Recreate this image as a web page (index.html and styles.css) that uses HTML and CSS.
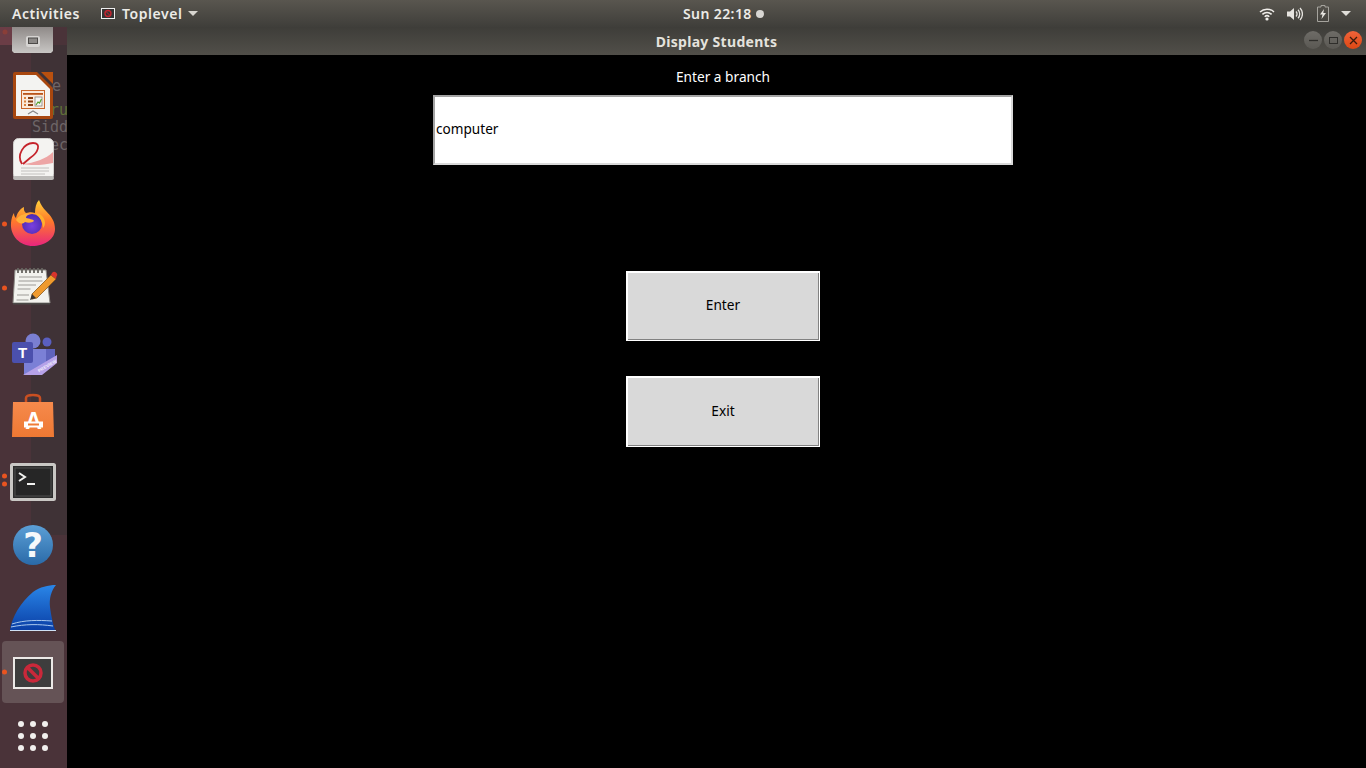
FILE: index.html
```html
<!DOCTYPE html>
<html lang="en">
<head>
<meta charset="utf-8">
<title>Display Students</title>
<link rel="stylesheet" href="styles.css">
</head>
<body>
<header class="topbar">
  <div class="top-left">
    <span class="activities">Activities</span>
    <span class="appmenu">
      <svg class="app-icon" width="14" height="11" viewBox="0 0 14 11"><rect x=".5" y=".5" width="13" height="10" fill="#333" stroke="#eee"/><circle cx="7" cy="5.500" r="3" fill="none" stroke="#c4242f" stroke-width="1.400"/><path d="M5 3.500l4 4" stroke="#c4242f"/></svg>
      <span class="app-name">Toplevel</span>
      <svg class="caret" width="10" height="5" viewBox="0 0 10 5"><path d="M0 0h10L5 5z" fill="#d8d6d0"/></svg>
    </span>
  </div>
  <div class="clock">Sun 22:18<i class="clock-dot"></i></div>
  <div class="tray">
    <svg width="16" height="14" viewBox="0 0 16 14"><path d="M1 5a10 10 0 0 1 14 0M3.400 7.400a6.600 6.600 0 0 1 9.200 0M5.700 9.700a3.400 3.400 0 0 1 4.600 0" fill="none" stroke="#f0eeea" stroke-width="1.500"/><circle cx="8" cy="12" r="1.600" fill="#f0eeea"/></svg>
    <svg width="16" height="14" viewBox="0 0 16 14"><path d="M0 4.500h3L7 1v12L3 9.500H0z" fill="#e6e4df"/><path d="M9 4.500a3.500 3.500 0 0 1 0 5M11 2.800a6 6 0 0 1 0 8.400M13 1a8.600 8.600 0 0 1 0 12" fill="none" stroke="#e6e4df" stroke-width="1.300"/></svg>
    <svg class="battery" width="12" height="17" viewBox="0 0 12 17"><path d="M4 .5h4v1.500h3.500v14.500h-11V2H4z" fill="none" stroke="#a5a39d"/><path d="M7 4L3 9.500h2.500L4.500 14 9 8H6.300z" fill="#e8e6e1"/></svg>
    <svg width="10" height="5" viewBox="0 0 10 5"><path d="M0 0h10L5 5z" fill="#e0ded9"/></svg>
  </div>
</header>
<div class="desktop">
  <aside class="dock">
    <div class="ghost" aria-hidden="true">
      <span class="ghost-e">e</span>
      <span class="ghost-ru">ru</span>
      <span class="ghost-sidd">Sidd</span>
      <span class="ghost-ec">ec</span>
    </div>
    <div class="dock-item first">
      <svg width="62" height="36" viewBox="0 0 62 36">
        <defs><linearGradient id="tile" x1="0" y1="0" x2="0" y2="1"><stop offset="0" stop-color="#8f8a88"/><stop offset="1" stop-color="#c8c6c4"/></linearGradient></defs>
        <circle cx="3" cy="5" r="2.500" fill="#8a3e38"/>
        <path d="M10 0h41v24l-2 2H12l-2-2z" fill="url(#tile)"/>
        <rect x="24" y="9" width="14" height="11" rx="2" fill="#d6d4d2"/>
        <rect x="26.500" y="11" width="9" height="5.500" fill="#8b8886" stroke="#4c4a48"/>
      </svg>
    </div>
    <div class="dock-item">
      <svg width="62" height="62" viewBox="0 0 62 62">
        <path d="M13 7h22l16 16v29a2 2 0 0 1-2 2H13a2 2 0 0 1-2-2V9a2 2 0 0 1 2-2z" fill="#a8470f"/>
        <path d="M39 7h12v12z" fill="#b9500f"/>
        <path d="M14 10h20l14 14v27H14z" fill="#f3f3f1"/>
        <rect x="19.500" y="25.500" width="23" height="18" fill="#fbe9da" stroke="#c8652a"/>
        <rect x="21" y="28" width="20" height="1.800" fill="#b9541a"/>
        <rect x="26" y="32" width="5" height="2" fill="#8a3f12"/><rect x="26" y="35.500" width="5" height="2" fill="#8a3f12"/><rect x="26" y="39" width="5" height="2" fill="#8a3f12"/>
        <rect x="22" y="32" width="2" height="2" fill="#d9823f"/><rect x="22" y="35.500" width="2" height="2" fill="#d9823f"/><rect x="22" y="39" width="2" height="2" fill="#d9823f"/>
        <rect x="33" y="32" width="7" height="9" fill="#f5f5f2" stroke="#777" stroke-width=".7"/>
        <path d="M34 40l2-3 1.500 1 2-4" fill="none" stroke="#57a22e" stroke-width="1.200"/>
        <path d="M26 49l5-3 5 3" fill="none" stroke="#888" stroke-width="1.200"/>
      </svg>
    </div>
    <div class="dock-item">
      <svg width="62" height="62" viewBox="0 0 62 62">
        <rect x="11.500" y="9.500" width="40" height="41" rx="5" fill="#f4f3f1" stroke="#d2d0ce"/>
        <rect x="11" y="47" width="41" height="4" rx="2" fill="#bdbbb9"/>
        <path d="M21 35C32 34 44 30 51 23V34C42 36 30 37 21 35Z" fill="#eda5a5"/>
        <path d="M20 35C14 26 22 14 31 14C40 14 36 24 28 29L21 35" fill="none" stroke="#c5232b" stroke-width="1.800"/>
        <path d="M19 39h28M19 42h28M19 45h24" stroke="#c2c0be" stroke-width="1"/>
      </svg>
    </div>
    <div class="dock-item">
      <svg width="62" height="62" viewBox="0 0 62 62">
        <defs>
          <linearGradient id="fox" x1="0" y1="0" x2="0" y2="1"><stop offset="0" stop-color="#ffd23a"/><stop offset=".45" stop-color="#ff7a2a"/><stop offset="1" stop-color="#e8257d"/></linearGradient>
          <radialGradient id="globe" cx=".5" cy=".6" r=".6"><stop offset="0" stop-color="#7a3fe0"/><stop offset="1" stop-color="#4a2bb0"/></radialGradient>
        </defs>
        <circle cx="2.500" cy="31" r="2.500" fill="#e95420"/>
        <path d="M31 53C18 53 8 43 9 30c.3-4 1.500-8 3-10 0 3 1 4 2 5 1-5 4-9 8-11-.5 3 .5 5 2 6 4-1 6-1 9 0 0-5 1-10 4-13 2 5 4 8 7 11 5 5 9 10 9 18 0 10-10 17-23 17z" fill="url(#fox)"/>
        <circle cx="30" cy="31" r="10" fill="url(#globe)"/>
        <path d="M14 27c3-5 9-7 14-6-3 1-4 2-4 4 3 1 7 1 8 3-2 2-6 2-9 1-3 3-7 1-9-2z" fill="#ffb13a"/>
        <path d="M33 20c5 0 10 4 10 10 0 2-1 4-2 5 0-6-3-11-8-15z" fill="#ffb02c"/>
      </svg>
    </div>
    <div class="dock-item">
      <svg width="62" height="62" viewBox="0 0 62 62">
        <circle cx="2.500" cy="31" r="2.500" fill="#e95420"/>
        <path d="M13 13h31l4 33H11z" fill="#f2f2ee" stroke="#8d8b86"/>
        <path d="M11 46.800h37" stroke="#4c4a48" stroke-width="1.500"/>
        <path d="M16 11v5M20 11v5M24 11v5M28 11v5M32 11v5M36 11v5M40 11v5" stroke="#66645f" stroke-width="1.800"/>
        <path d="M17 20h23M16.500 24h24M16 28h18M15.500 32h13M15 38h12M14.500 43h12" stroke="#9c9a96" stroke-width="1.200"/>
        <path d="M30 37L49 18l5 4L35 41l-5 1z" fill="#ef9a2e" stroke="#8a5a1c" stroke-width=".8"/>
        <path d="M49 18l1-2a2.500 2.500 0 0 1 4.500 3.500l-.5 2.500z" fill="#d8342c"/>
        <path d="M30 37l-2 6 6-2z" fill="#3a3532"/>
      </svg>
    </div>
    <div class="dock-item">
      <svg width="62" height="62" viewBox="0 0 62 62">
        <circle cx="31" cy="20" r="7.500" fill="#7a7fd2"/>
        <circle cx="45" cy="21" r="4.500" fill="#5a5fc0"/>
        <path d="M39 28h14v12L39 48z" fill="#5f63bd"/>
        <path d="M22 28h22v16L22 54z" fill="#7b80d6"/>
        <rect x="10" y="21" width="21" height="21" rx="2" fill="#4b50ad"/>
        <text class="teams-t" x="20.500" y="37">T</text>
        <path d="M21 54L55 34V42L40 54z" fill="#b6a2e8"/>
        <text class="teams-p" transform="translate(37 51.500) rotate(-30)">PREVIEW</text>
      </svg>
    </div>
    <div class="dock-item">
      <svg width="62" height="62" viewBox="0 0 62 62">
        <defs><linearGradient id="bag" x1="0" y1="0" x2="0" y2="1"><stop offset="0" stop-color="#f68a4c"/><stop offset="1" stop-color="#ee7833"/></linearGradient></defs>
        <path d="M24 19v-6c0-4 14-4 14 0v6" fill="none" stroke="#c94f21" stroke-width="2.500"/>
        <path d="M11 17h40l1 35H10z" fill="url(#bag)"/>
        <text class="store-a" x="31.500" y="44">A</text>
        <rect x="22" y="36.500" width="19" height="6" fill="#fff"/>
        <rect x="26" y="38.500" width="11" height="2" fill="#f07c38"/>
      </svg>
    </div>
    <div class="dock-item">
      <svg width="62" height="62" viewBox="0 0 62 62">
        <circle cx="2.500" cy="27" r="2.500" fill="#e95420"/>
        <circle cx="2.500" cy="35" r="2.500" fill="#e95420"/>
        <rect x="9.500" y="15.500" width="43" height="35" rx="1" fill="#2c2c2c" stroke="#c9c7c4" stroke-width="3"/>
        <rect x="13" y="19" width="36" height="28" fill="#262626" stroke="#4f4f4f"/>
        <path d="M17 24l6 4-6 4" fill="none" stroke="#f2f2f0" stroke-width="2"/>
        <path d="M25 35h8" stroke="#f2f2f0" stroke-width="2"/>
      </svg>
    </div>
    <div class="dock-item">
      <svg width="62" height="62" viewBox="0 0 62 62">
        <defs><linearGradient id="help" x1="0" y1="0" x2="0" y2="1"><stop offset="0" stop-color="#5b9fd6"/><stop offset="1" stop-color="#2a6aa8"/></linearGradient></defs>
        <circle cx="31" cy="32" r="20" fill="url(#help)"/>
        <text class="help-q" x="31" y="44">?</text>
      </svg>
    </div>
    <div class="dock-item">
      <svg width="62" height="62" viewBox="0 0 62 62">
        <defs><linearGradient id="shark" x1="0" y1="0" x2="0" y2="1"><stop offset="0" stop-color="#2a86e8"/><stop offset="1" stop-color="#0a3fa6"/></linearGradient></defs>
        <path d="M8 53C10 40 18 26 31 15C38 10 46 8 54 8C49 14 47 22 48 30C49 38 51 47 53 53Z" fill="url(#shark)"/>
        <path d="M10 47c12-4 26-4 40-3M9 50c14-3 28-3 42-1" stroke="#a9c8ee" stroke-width="1" fill="none"/>
        <path d="M8 53.500h46" stroke="#cfe0f4" stroke-width="1"/>
      </svg>
    </div>
    <div class="dock-item active">
      <svg width="62" height="62" viewBox="0 0 62 62">
        <circle cx="2.500" cy="31" r="2.500" fill="#e95420"/>
        <rect x="12" y="17" width="38" height="30" fill="#3d3d3d" stroke="#ece9e7" stroke-width="2"/>
        <circle cx="31" cy="32" r="8" fill="none" stroke="#c9283a" stroke-width="3.500"/>
        <path d="M25.500 26.500l11 11" stroke="#c9283a" stroke-width="3.500"/>
      </svg>
    </div>
    <div class="dock-item">
      <svg width="62" height="62" viewBox="0 0 62 62" fill="#f1efed">
        <circle cx="19" cy="19" r="3"/><circle cx="31" cy="19" r="3"/><circle cx="43" cy="19" r="3"/>
        <circle cx="19" cy="31" r="3"/><circle cx="31" cy="31" r="3"/><circle cx="43" cy="31" r="3"/>
        <circle cx="19" cy="43" r="3"/><circle cx="31" cy="43" r="3"/><circle cx="43" cy="43" r="3"/>
      </svg>
    </div>
  </aside>
  <section class="window">
    <div class="titlebar">
      <span class="title">Display Students</span>
      <div class="controls">
        <span class="ctl"><svg width="9" height="9" viewBox="0 0 9 9"><path d="M0 4.500h9" stroke="#2f2e2b" stroke-width="1.300"/></svg></span>
        <span class="ctl"><svg width="9" height="9" viewBox="0 0 9 9"><rect x=".5" y="1.500" width="8" height="6" fill="none" stroke="#2f2e2b"/></svg></span>
        <span class="ctl close"><svg width="9" height="9" viewBox="0 0 9 9"><path d="M1 1l7 7M8 1l-7 7" stroke="#3a1a0c" stroke-width="1.300"/></svg></span>
      </div>
    </div>
    <main class="canvas">
      <p class="label">Enter a branch</p>
      <div class="entry">computer</div>
      <button class="tk-btn enter" type="button">Enter</button>
      <button class="tk-btn exit" type="button">Exit</button>
    </main>
  </section>
</div>
</body>
</html>
```

FILE: styles.css
```css
* { box-sizing: border-box; }
html, body { margin: 0; height: 100%; }
body {
  width: 1366px;
  height: 768px;
  overflow: hidden;
  display: flex;
  flex-direction: column;
  background: #000;
  font-family: "Noto Sans", sans-serif;
}

/* top bar */
.topbar {
  height: 27px;
  flex: none;
  display: grid;
  grid-template-columns: 683px auto 1fr;
  align-items: center;
  background: linear-gradient(#59564f, #3f3e3a);
  color: #ecebe7;
  font-weight: 600;
  font-size: 14px;
  position: relative;
  z-index: 2;
}
.top-left { display: flex; align-items: center; padding-left: 12px; }
.activities { width: 89px; letter-spacing: .55px; }
.appmenu { display: flex; align-items: center; }
.app-name { margin-left: 7px; letter-spacing: .55px; }
.caret { margin-left: 6px; }
.clock { display: flex; align-items: center; letter-spacing: .4px; }
.clock-dot { width: 8px; height: 8px; border-radius: 50%; background: #d8d6d2; margin-left: 4px; }
.tray { display: flex; align-items: center; justify-content: flex-end; gap: 12px; padding-right: 15px; }
.battery { margin-left: 2px; }

/* desktop */
.desktop { flex: 1; display: flex; min-height: 0; }

/* dock */
.dock {
  width: 67px;
  flex: none;
  position: relative;
  overflow: hidden;
  display: flex;
  flex-direction: column;
  gap: 2px;
  padding: 0 3px 0 2px;
  background: #4a3339;
}
.dock::before {
  content: "";
  position: absolute;
  left: 31px;
  right: 0;
  top: 18px;
  height: 490px;
  background: #3f3236;
}
.dock::after {
  content: "";
  position: absolute;
  left: 0;
  top: 0;
  width: 50px;
  height: 18px;
  background: #6b3d46;
}
.ghost {
  position: absolute;
  inset: 0;
  font-family: "DejaVu Sans Mono", monospace;
  font-size: 15px;
  color: #6d6567;
  z-index: 1;
}
.ghost span { position: absolute; line-height: 18px; }
.ghost-e { left: 52px; top: 50px; }
.ghost-ru { left: 50px; top: 74px; color: #5f7038; }
.ghost-sidd { left: 32px; top: 91px; }
.ghost-ec { left: 50px; top: 109px; }
.dock-item { height: 62px; flex: none; position: relative; z-index: 2; display: block; border-radius: 4px; }
.dock-item svg { display: block; }
.dock-item.first { height: 36px; }
.dock-item.active { background: #655356; }
.teams-t { font: 700 15px "Liberation Sans", sans-serif; fill: #fff; text-anchor: middle; }
.teams-p { font: 700 4.500px "Liberation Sans", sans-serif; fill: #f3effc; }
.store-a { font: 700 23px "Liberation Sans", sans-serif; fill: #fff; text-anchor: middle; }
.help-q { font: 700 34px "DejaVu Sans", sans-serif; fill: #f5f8fb; text-anchor: middle; }

/* window */
.window { flex: 1; display: flex; flex-direction: column; min-width: 0; }
.titlebar {
  height: 28px;
  flex: none;
  position: relative;
  display: flex;
  align-items: center;
  justify-content: center;
  background: linear-gradient(#3e3d39, #514f49);
}
.title {
  color: #e4e2dd;
  font-weight: 700;
  font-size: 14px;
  letter-spacing: .3px;
}
.controls {
  position: absolute;
  right: 4px;
  top: 4px;
  display: flex;
  gap: 2px;
}
.ctl {
  width: 18px;
  height: 18px;
  border-radius: 50%;
  display: flex;
  align-items: center;
  justify-content: center;
  background: linear-gradient(#6e6c67, #5a5853);
}
.ctl.close { background: linear-gradient(#f0633a, #dd4814); }

/* tk content */
.canvas {
  flex: 1;
  background: #000;
  display: flex;
  flex-direction: column;
  align-items: center;
  padding: 13px 0 0 13px;
}
.label {
  margin: 0;
  height: 27px;
  line-height: 17px;
  color: #fff;
  font-size: 13.700px;
}
.entry {
  width: 580px;
  height: 70px;
  display: flex;
  align-items: center;
  padding: 0 0 4px 1px;
  background: #fff;
  color: #000;
  font-size: 13.600px;
  border: 2px solid;
  border-color: #a3a3a3 #d9d9d9 #d9d9d9 #a3a3a3;
}
.tk-btn {
  display: block;
  width: 194px;
  padding: 0 0 4px;
  background: #d9d9d9;
  color: #000;
  font-family: "Noto Sans", sans-serif;
  font-size: 13.700px;
  border: 1px solid #fff;
  border-radius: 0;
  box-shadow: inset 1px 1px 0 #fff, inset -1px -1px 0 #828282;
}
.enter { height: 70px; margin-top: 106px; }
.exit { height: 71px; margin-top: 35px; padding-bottom: 3px; }
```
